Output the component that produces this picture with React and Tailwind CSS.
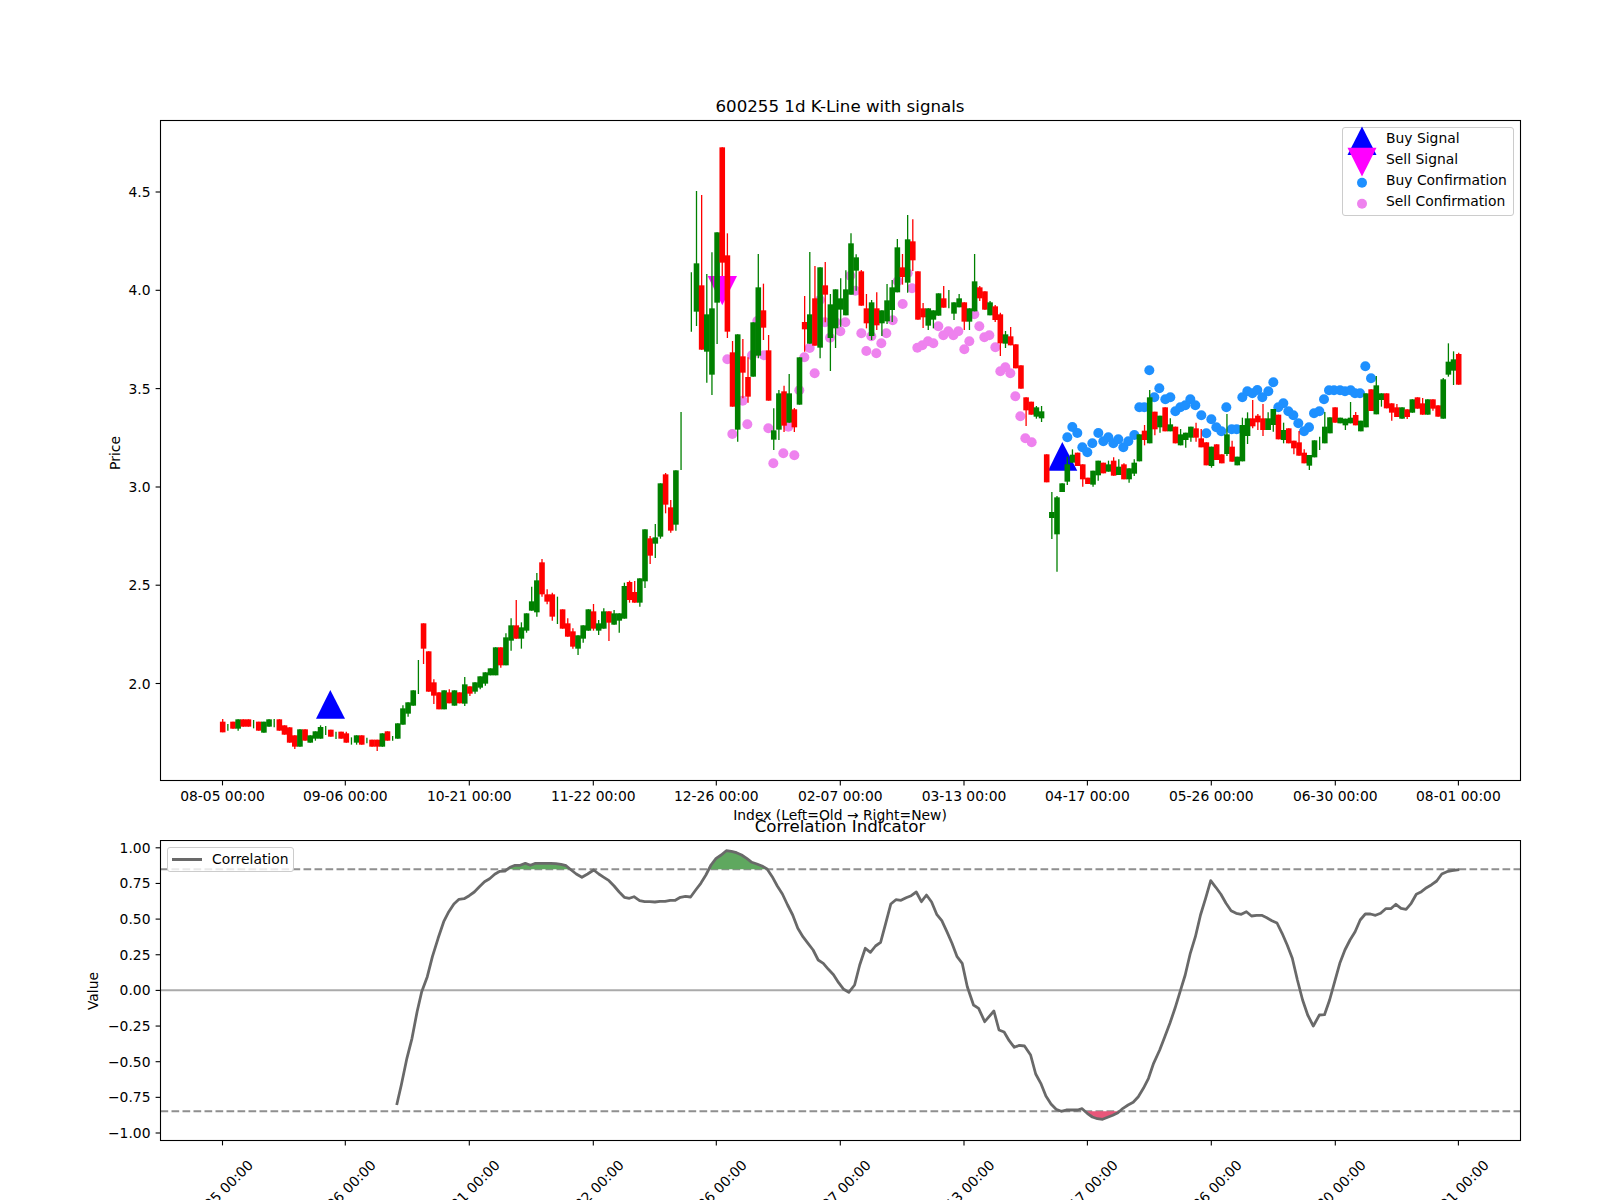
const RED = "#ff0000";
const GREEN = "#008000";

const tickX = [222.5, 345.3, 469.3, 593.3, 716.3, 840.3, 964, 1087.4, 1211.3, 1335.3, 1458.4];
const dates = ["08-05 00:00", "09-06 00:00", "10-21 00:00", "11-22 00:00", "12-26 00:00", "02-07 00:00", "03-13 00:00", "04-17 00:00", "05-26 00:00", "06-30 00:00", "08-01 00:00"];
const priceTicks = [["4.5", 192], ["4.0", 290.3], ["3.5", 388.6], ["3.0", 487], ["2.5", 585.2], ["2.0", 683.5]];
const corrTicks = ["1.00", "0.75", "0.50", "0.25", "0.00", "\u22120.25", "\u22120.50", "\u22120.75", "\u22121.00"];

// candles traced from the chart: [red?, bodyTop, bodyBottom, high, low], 3x crop coordinates
// body null = only a wick
const seriesA = [
  [1,365,397,357,397],[0,null,null,372,392],[1,365,386],[0,358,386,358,392],[1,358,380],[1,358,380],[0,null,null,360,385],[1,365,392],
  [0,365,398],[0,358,380],[0,null,null,357,382],[1,358,392],[1,376,404],[1,382,428],[1,406,440,406,447],[0,388,440],[1,388,422],[0,406,428],
  [0,394,416,394,422],[0,381,416,376,416],[0,null,null,378,405],[1,389,410],[0,null,null,395,417],[1,395,416],[1,400,428,395,428],[0,null,null,412,434],
  [0,406,428,406,434],[1,406,434],[0,null,null,413,430],[1,419,440],[1,419,440,419,453],[0,400,440],[1,394,422],[0,null,null,408,422],[0,370,416],
  [0,325,374,316,374],[0,307,341,307,350],[0,271,317],[0,null,null,180,282],[1,70,146,70,192],[1,154,275],[1,247,287,238,312],[1,277,328],[0,271,328],
  [1,277,310,268,310],[0,271,317],[1,277,310],[0,253,311,231,318],[1,259,281,259,288],[0,247,275,247,281],[0,229,263,229,268],[0,217,251,217,257],
  [0,205,226],[0,142,226],[1,142,196,142,203],[0,112,196,100,196],[0,76,122,55,152],
];
const seriesB = [
  [1,676,716,600,716],[0,682,716,667,746],[0,640,692,640,698],[0,604,632,560,632],[0,541,637,519,650],[1,487,583,477,590],[1,583,605,568,613],
  [1,583,650,578,662],[0,null,null,590,672],[1,628,686],[1,670,710,655,710],[1,694,740,685,746],[0,706,746,706,765],[0,676,716,676,728],[0,628,692],
  [1,634,686,612,692],[0,670,692,660,705],[0,634,686,625,686],[1,634,668,634,723],[0,640,674,630,674],[0,640,662,640,698],[0,558,656,548,656],
  [1,546,600,542,608],[1,576,608,543,608],[0,535,608,535,620],[0,388,544,388,564],[1,415,467,408,492],[0,412,431,372,474],[0,250,410,250,416],
  [1,223,314,219,340],[1,322,392,300,398],[0,211,374,211,392],[0,null,null,36,210],
];
const seriesC = [
  [0,null,null,457,635],[0,430,575,213,618],[1,496,689,225,689],[0,583,695,462,788],[0,565,764,397,825],[0,337,548,337,672],[1,82,428,82,468],
  [1,406,635,340,654],[1,697,860,663,860],[0,643,929,643,965],[1,709,758,657,835],[1,771,830,712,848],[0,607,770],[0,502,707,402,715],[1,571,623,491,660],
  [1,691,842,645,842],[0,931,959,865,990],[0,820,929,810,960],[1,814,917,797,936],[0,820,908,762,908],[1,868,922,864,936],[0,712,854],[1,606,628,528,695],
  [0,583,671,396,671],[1,535,677,438,677],[0,442,683,442,715],[1,496,524,426,607],[0,553,654,522,753],[0,508,625,508,684],[0,535,569,475,620],
  [0,508,586,451,586],[0,370,524,340,524],[0,412,452,403,512],[1,454,557,450,557],[1,565,610,522,625],[0,547,648,540,660],[1,565,616,517,630],
  [0,571,610,571,648],[0,541,604,492,612],[0,502,570,480,606],[0,382,517,357,517],[1,442,471,402,494],[0,358,488,285,518],[1,364,421,298,453],
  [1,454,599],[1,565,592,549,624],[0,565,617,565,630],[0,571,599,571,625],[0,520,587],[1,535,563,498,563],[0,null,null,510,565],[0,547,581,547,600],
  [0,535,562,522,562],[1,547,605,547,630],[0,565,605,565,630],[0,484,574,402,574],[1,502,535,498,543],[1,514,569],[0,547,586,543,586],[1,559,600,555,606],
  [1,583,670,578,708],[0,643,671,633,684],[1,649,676,621,676],[1,673,745],[1,736,806],[1,832,871,832,918],[1,845,884],[0,862,890,858,896],[0,874,895,858,906],
];
const seriesD = [
  [1,1033,1117],[0,1206,1224,1146,1287],[0,1162,1273,1158,1385],[0,1120,1146],[0,1063,1115,1040,1125],[0,1034,1058,1018,1058],[1,1028,1068],[1,1063,1108,1063,1130],
  [1,1103,1122],[0,1082,1124,1082,1130],[0,1052,1096,1052,1112],[1,1058,1090],[0,1063,1085,1052,1085],[1,1052,1097,1042,1097],[0,1070,1095,1048,1095],
  [1,1063,1108,1060,1108],[0,1075,1108,1075,1118],[0,1058,1091,1048,1098],[0,973,1054],[1,962,990,945,1006],[0,862,1000,840,1000],[1,905,958,905,976],
  [0,917,952,917,968],[1,892,964],[0,943,964,925,964],[1,950,1000],[0,973,1006,957,1006],[0,968,990,968,1013],[0,950,983,950,995],[1,955,983,938,995],
  [1,985,1012,957,1012],[1,997,1066],[0,1010,1068,1010,1073],[1,1003,1050],[1,1033,1060],[0,973,1032,912,1038],[1,1010,1055,992,1055],[0,1040,1066],
  [0,945,1054,923,1054],[0,925,978,907,1002],[1,925,949,870,955],[1,917,937,912,960],[1,925,960,882,978],[0,925,960,907,960],[0,897,945,897,965],[1,914,988],
  [0,960,990,938,1000],[1,955,1000],[1,992,1015,992,1033],[1,997,1037,963,1037],[1,1028,1060,1018,1060],[0,1035,1067,1035,1080],[0,991,1042],[0,null,null,980,1020],
  [0,950,1000,906,1000],[0,922,970],[1,892,938],[0,923,940],[0,926,946,926,960],[0,923,940,876,940],[1,915,946,906,946],[0,932,964],[0,850,952],[1,838,903],
  [0,826,913,798,913],[0,850,870,850,890],[1,850,895],[1,880,908,880,932],[1,892,921,882,921],[0,892,926],[1,898,921,898,927],[0,868,908],[1,862,896],
  [1,880,914,864,914],[0,868,914],[1,868,896,868,902],[1,886,920],[0,808,926,804,926],[0,755,794,700,800],[0,748,782,724,825],[1,732,824,728,824],
];

const candles = [];
const addSeries = (rows, start, y0) => {
  rows.forEach(([red, top, bottom, high, low], n) => {
    const hi = high ?? top;
    const lo = low ?? bottom;
    candles.push({
      x: 222.7 + 5.15 * (start + n),
      color: red ? RED : GREEN,
      top: top === null ? null : y0 + top / 3,
      bottom: bottom === null ? null : y0 + bottom / 3,
      high: y0 + hi / 3,
      low: y0 + lo / 3,
    });
  });
};
addSeries(seriesA, 0, 600);
addSeries(seriesB, 57, 400);
addSeries(seriesC, 91, 120);
addSeries(seriesD, 160, 110);

const sellDots = [[262,718],[277,942],[308,842],[322,913],[336,706],[352,603],[372,706],[385,925],[400,1030],[430,1000],[445,920],[463,1006],[478,811],[493,712],[509,684],[524,760],[540,540],[555,607],[570,653],[587,607],[601,634],[616,607],[631,467],[646,512],[664,640],[679,693],[694,649],[709,700],[724,670],[739,640],[758,601],[773,484],[788,552],[803,460],[816,505],[832,683],[847,676],[864,664],[880,670],[895,619],[910,646],[925,634],[940,646],[955,634],[973,688],[988,664],[1003,583],[1018,619],[1033,652],[1048,646],[1066,682],[1081,754],[1096,742],[1111,760],[1126,829],[1141,889],[1156,955],[1175,967]]
  .map(([x, y]) => [640 + x / 3, 120 + y / 3]);

const buyDots = [[112,982],[127,951],[142,969],[157,1012],[172,1027],[187,1000],[205,969],[220,994],[235,982],[250,1000],[265,988],[280,1012],[295,994],[313,975],[328,892],[343,892],[358,781],[373,862],[388,835],[406,868],[421,862],[436,904],[451,892],[466,886],[481,868],[496,886],[514,916],[529,970],[544,928],[559,952],[574,964],[589,892],[605,958],[620,958],[637,862],[652,844],[667,850],[682,840],[697,862],[715,844],[730,817],[745,892],[760,880],[775,904],[790,916],[805,940],[822,964],[837,952],[852,910],[868,904],[882,868],[897,841],[912,841],[930,841],[945,844],[962,841],[975,850],[990,850],[1006,769],[1023,805]]
  .map(([x, y]) => [1030 + x / 3, 110 + y / 3]);

const traceLeft = [[660,915],[669,855],[680,775],[690,715],[700,635],[709,575],[720,530],[730,470],[741,415],[752,365],[762,335],[772,312],[782,298],[792,296],[802,287],[812,276],[822,260],[832,245],[842,236],[852,223],[862,214],[872,213],[882,202],[892,196],[902,196],[912,190],[922,196],[932,190],[942,190],[952,190],[962,190],[972,191],[982,193],[992,197],[1002,210],[1012,222],[1023,232],[1034,222],[1046,210],[1056,222],[1066,232],[1076,242],[1086,258],[1096,276],[1106,292],[1116,295],[1125,290],[1136,302],[1146,305],[1156,305],[1166,306],[1176,304],[1186,304],[1196,301],[1206,301],[1216,292],[1226,289],[1236,291],[1246,270],[1256,250],[1266,225],[1276,195],[1286,175],[1296,165],[1306,152],[1316,154],[1326,158],[1336,165],[1346,175],[1356,187],[1366,192],[1376,198],[1386,207],[1396,230],[1406,258],[1416,282],[1426,315],[1436,345],[1446,385],[1456,410],[1466,430],[1476,450],[1486,480],[1496,490],[1506,508],[1516,524],[1526,548],[1536,568],[1546,577]];
const traceRight = [[107,555],[117,495],[128,445],[138,457],[148,438],[158,427],[168,370],[178,312],[188,299],[198,301],[208,293],[218,287],[228,276],[238,305],[248,285],[258,306],[268,343],[278,362],[288,395],[298,430],[308,470],[318,490],[328,560],[340,615],[350,625],[362,665],[380,633],[390,690],[400,696],[410,722],[420,742],[430,736],[440,738],[452,765],[462,822],[472,850],[482,888],[492,912],[502,928],[512,934],[522,930],[534,930],[544,930],[553,926],[563,940],[573,951],[583,956],[593,958],[603,952],[613,946],[623,938],[633,925],[643,915],[653,907],[663,890],[673,865],[683,835],[693,790],[705,750],[715,710],[725,670],[735,625],[745,575],[755,525],[765,460],[775,410],[785,345],[795,295],[805,242],[815,262],[825,283],[835,310],[845,332],[855,340],[865,343],[875,335],[885,348],[895,346],[905,346],[915,353],[925,362],[935,369],[945,400],[955,435],[965,475],[975,540],[985,600],[995,645],[1006,678],[1018,645],[1028,644],[1038,600],[1048,545],[1058,490],[1068,450],[1078,420],[1088,395],[1098,360],[1108,342],[1118,342],[1128,346],[1138,340],[1148,326],[1158,326],[1168,313],[1178,325],[1188,328],[1198,310],[1208,283],[1218,275],[1228,263],[1238,254],[1248,243],[1258,222],[1268,215],[1278,212],[1292,209]];

const corrLine = [
  ...traceLeft.map(([x, y]) => [60 + x / 1.96, 800 + y / 3]),
  ...traceRight.map(([x, y]) => [800 + x / 1.96, 800 + y / 3]),
];

const UPPER = 869.2;
const LOWER = 1111.2;

// parts of the line beyond a threshold, closed along the threshold
function beyond(points, limit, isBeyond) {
  const runs = [];
  let run = null;
  points.forEach((p, i) => {
    const prev = points[i - 1];
    if (isBeyond(p[1])) {
      if (!run) {
        run = [];
        if (prev) {
          const t = (limit - prev[1]) / (p[1] - prev[1]);
          run.push([prev[0] + (p[0] - prev[0]) * t, limit]);
        }
      }
      run.push(p);
    } else if (run) {
      const t = (limit - prev[1]) / (p[1] - prev[1]);
      run.push([prev[0] + (p[0] - prev[0]) * t, limit]);
      runs.push(run);
      run = null;
    }
  });
  return runs;
}

const toPoints = (pts) => pts.map(([x, y]) => `${x.toFixed(1)},${y.toFixed(1)}`).join(" ");

function Candle({ c }) {
  return (
    <g>
      <line x1={c.x} x2={c.x} y1={c.high} y2={c.low} stroke={c.color} strokeWidth="1.3" />
      {c.top !== null && <rect x={c.x - 2.8} y={c.top} width="5.6" height={c.bottom - c.top} fill={c.color} />}
    </g>
  );
}

function PriceChart() {
  return (
    <svg viewBox="0 120 1600 686" className="block w-[1600px] h-[686px] overflow-visible">
      <polygon points="316,718.7 345,718.7 330.3,690" fill="#0000ff" />
      <polygon points="1048,470.7 1077.3,470.7 1062.3,442" fill="#0000ff" />
      <polygon points="707.7,276 737,276 722.3,305.3" fill="#ff00ff" />
      {sellDots.map(([x, y], i) => <circle key={i} cx={x} cy={y} r="5" fill="#ee82ee" />)}
      {buyDots.map(([x, y], i) => <circle key={i} cx={x} cy={y} r="5" fill="#1e90ff" />)}
      {candles.map((c, i) => <Candle key={i} c={c} />)}
      <rect x="160.5" y="120.5" width="1360" height="660" fill="none" stroke="#000" strokeWidth="1.1" />
      {priceTicks.map(([label, y]) => (
        <g key={label}>
          <line x1="155.6" x2="160.5" y1={y} y2={y} stroke="#000" strokeWidth="1.1" />
          <text x="150.5" y={y + 5} textAnchor="end" className="text-[13.89px] fill-black">{label}</text>
        </g>
      ))}
      {tickX.map((x, i) => (
        <g key={x}>
          <line x1={x} x2={x} y1="780.5" y2="785.4" stroke="#000" strokeWidth="1.1" />
          <text x={x} y="801" textAnchor="middle" className="text-[13.89px] fill-black">{dates[i]}</text>
        </g>
      ))}
      <text transform="translate(120 453) rotate(-90)" textAnchor="middle" className="text-[13.89px] fill-black">Price</text>
    </svg>
  );
}

function CorrChart() {
  const above = beyond(corrLine, UPPER, (y) => y < UPPER);
  const below = beyond(corrLine, LOWER, (y) => y > LOWER);
  return (
    <svg viewBox="0 840 1600 360" className="block w-[1600px] h-[360px] overflow-hidden">
      <line x1="160.5" x2="1520.5" y1="990.2" y2="990.2" stroke="#aaaaaa" strokeWidth="2" />
      <line x1="160.5" x2="1520.5" y1={UPPER} y2={UPPER} stroke="#8f8f8f" strokeWidth="2" strokeDasharray="7.7 3.3" />
      <line x1="160.5" x2="1520.5" y1={LOWER} y2={LOWER} stroke="#8f8f8f" strokeWidth="2" strokeDasharray="7.7 3.3" />
      {above.map((run, i) => <polygon key={i} points={toPoints(run)} fill="#5fa85f" />)}
      {below.map((run, i) => <polygon key={i} points={toPoints(run)} fill="#e8577a" />)}
      <polyline points={toPoints(corrLine)} fill="none" stroke="#696969" strokeWidth="2.78" strokeLinejoin="round" />
      <rect x="160.5" y="840.5" width="1360" height="300" fill="none" stroke="#000" strokeWidth="1.1" />
      {corrTicks.map((label, i) => {
        const y = 847.8 + i * 35.65;
        return (
          <g key={label}>
            <line x1="155.6" x2="160.5" y1={y} y2={y} stroke="#000" strokeWidth="1.1" />
            <text x="150.5" y={y + 5} textAnchor="end" className="text-[13.89px] fill-black">{label}</text>
          </g>
        );
      })}
      {tickX.map((x, i) => (
        <g key={x}>
          <line x1={x} x2={x} y1="1140.5" y2="1145.4" stroke="#000" strokeWidth="1.1" />
          <text transform={`translate(${x + 1.5} 1196) rotate(-45)`} textAnchor="middle" className="text-[13.89px] fill-black">{dates[i]}</text>
        </g>
      ))}
      <text transform="translate(98 991) rotate(-90)" textAnchor="middle" className="text-[13.89px] fill-black">Value</text>
    </svg>
  );
}

function LegendRow({ icon, label }) {
  return (
    <div className="flex h-[21px] items-center">
      <svg viewBox="0 0 43 21" className="block h-[21px] w-[43px] shrink-0 overflow-visible">{icon}</svg>
      <span className="text-[13.89px] leading-[21px] whitespace-nowrap">{label}</span>
    </div>
  );
}

function PriceLegend() {
  return (
    <div className="absolute left-[1342px] top-[7px] h-[89px] w-[172px] rounded-[3px] border border-[#cccccc] bg-white/80">
      <LegendRow icon={<polygon points="4.5,27 33.5,27 19,-1.5" fill="#0000ff" />} label="Buy Signal" />
      <LegendRow icon={<polygon points="4.5,-1.2 33.5,-1.2 19,27.5" fill="#ff00ff" />} label="Sell Signal" />
      <LegendRow icon={<circle cx="19" cy="12.8" r="5" fill="#1e90ff" />} label="Buy Confirmation" />
      <LegendRow icon={<circle cx="19" cy="12.8" r="5" fill="#ee82ee" />} label="Sell Confirmation" />
    </div>
  );
}

export default function App() {
  return (
    <div className="h-[1200px] w-[1600px] overflow-hidden bg-white font-['DejaVu_Sans',sans-serif] text-black">
      <div className="flex h-[120px] items-end justify-center pb-[3px] pl-[80px] text-[16.67px] leading-[20px]">600255 1d K-Line with signals</div>
      <div className="relative">
        <PriceChart />
        <PriceLegend />
      </div>
      <div className="flex h-[18px] items-center justify-center pl-[80px] text-[13.89px] leading-[18px]">Index (Left=Old → Right=New)</div>
      <div className="flex h-[16px] items-end justify-center pb-[3px] pl-[80px] text-[16.67px] leading-[20px]">Correlation Indicator</div>
      <div className="relative">
        <CorrChart />
        <div className="absolute left-[167px] top-[7px] flex h-[25px] w-[127px] items-center gap-[10px] rounded-[3px] border border-[#cccccc] bg-white/80 pl-[4px]">
          <div className="h-[3px] w-[30px] bg-[#696969]" />
          <span className="text-[13.89px] leading-[21px]">Correlation</span>
        </div>
      </div>
    </div>
  );
}
